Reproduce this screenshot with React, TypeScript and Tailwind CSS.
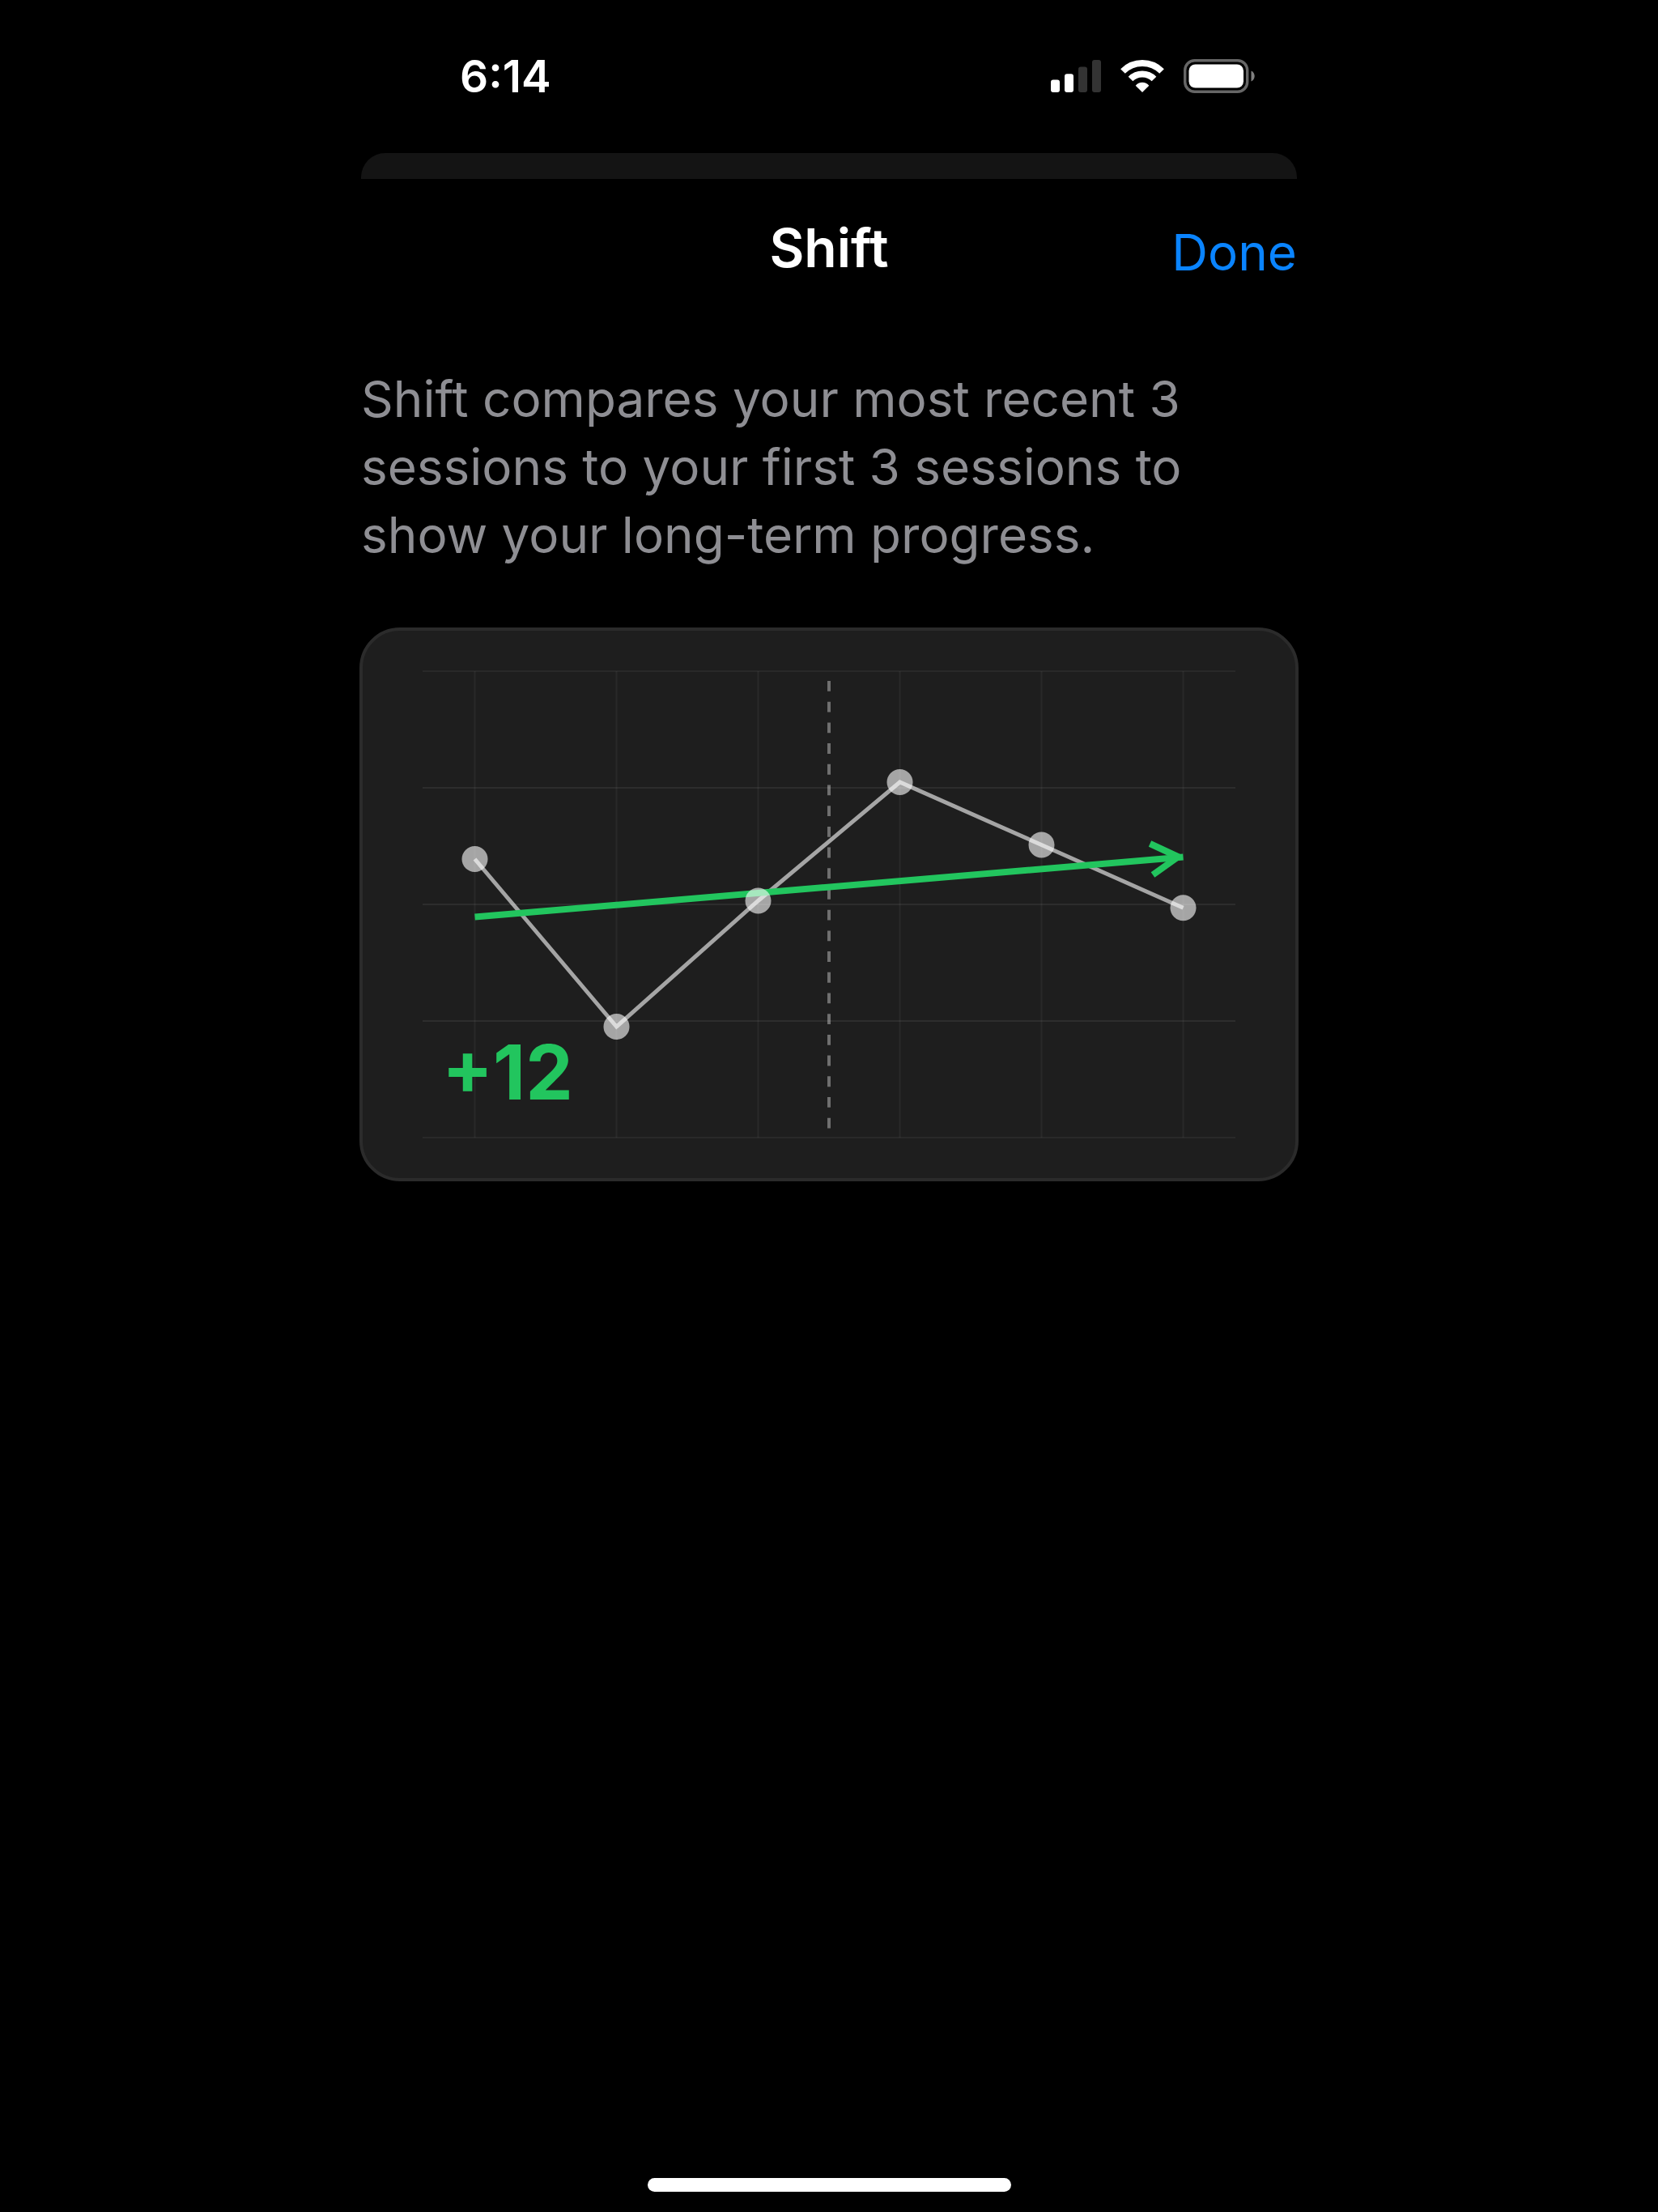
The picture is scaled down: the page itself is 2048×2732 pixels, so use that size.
import { useState } from "react"

type Point = {
  x: number
  y: number
}

const points: Point[] = [
  { x: 138.5, y: 282 },
  { x: 313.5, y: 489 },
  { x: 488.5, y: 333.5 },
  { x: 663.5, y: 187 },
  { x: 838.5, y: 264.5 },
  { x: 1013.5, y: 342.3 },
]

const rows = [50, 194, 338, 482, 626]

function SignalIcon() {
  return (
    <svg width="62" height="40" viewBox="0 0 62 40" aria-hidden="true">
      <rect x="0" y="24.5" width="11" height="15.5" rx="3" fill="#fff" />
      <rect x="17" y="17.3" width="11" height="22.7" rx="3" fill="#fff" />
      <rect x="34" y="8.5" width="11" height="31.5" rx="3" fill="#333" />
      <rect x="51" y="0" width="11" height="40" rx="3" fill="#333" />
    </svg>
  )
}

function WifiIcon() {
  return (
    <svg width="54" height="40" viewBox="0 0 54 40" aria-hidden="true">
      <g fill="none" stroke="#fff" strokeWidth="8">
        <path d="M2.96 13.96A34 34 0 0 1 51.04 13.96" />
        <path d="M12.5 23.5A20.5 20.5 0 0 1 41.5 23.5" />
      </g>
      <path d="M27 40L18.7 31.7A10.5 10.5 0 0 1 35.3 31.7Z" fill="#fff" />
    </svg>
  )
}

function BatteryIcon() {
  return (
    <svg width="88" height="42" viewBox="0 0 88 42" aria-hidden="true">
      <rect x="1.7" y="1.7" width="77" height="38.6" rx="12" fill="none" stroke="#666" strokeWidth="3.4" />
      <rect x="6.5" y="6.5" width="67.5" height="29" rx="8" fill="#fff" />
      <path d="M83.5 14.5C86 15.7 87.7 18 87.7 21S86 26.3 83.5 27.5Z" fill="#808080" />
    </svg>
  )
}

function ShiftChart() {

  const line = points.map((p) => `${p.x},${p.y}`).join(" ")

  return (
    <svg
      viewBox="0 0 1152 676"
      className="block w-full h-auto"
      role="img"
      aria-label="Shift +12"
    >

      {/* GRID */}

      <g stroke="#fff" strokeWidth="2">
        {rows.map((y, index) => (
          <line
            key={y}
            x1="74"
            x2="1078"
            y1={y}
            y2={y}
            strokeOpacity={index === 0 || index === rows.length - 1 ? 0.05 : 0.07}
          />
        ))}
        {points.map((p) => (
          <line key={p.x} x1={p.x} x2={p.x} y1="50" y2="626" strokeOpacity="0.05" />
        ))}
      </g>

      <line
        x1="576"
        x2="576"
        y1="62"
        y2="616"
        stroke="#fff"
        strokeOpacity="0.36"
        strokeWidth="4"
        strokeDasharray="12.85 12.85"
      />

      {/* SESSIONS */}

      <polyline points={line} fill="none" stroke="#fff" strokeOpacity="0.6" strokeWidth="5" />

      {/* TREND ARROW */}

      <g stroke="#22c55e" strokeWidth="8">
        <line x1="138.5" y1="353.5" x2="1013.5" y2="279.5" />
        <line x1="972.5" y1="263" x2="1009" y2="280" />
        <line x1="976" y1="301.5" x2="1009" y2="278" />
      </g>

      {points.map((p) => (
        <circle key={p.x} cx={p.x} cy={p.y} r="16" fill="#fff" fillOpacity="0.6" />
      ))}

      <text x="98" y="579" fontSize="93" fontWeight="700" fill="#22c55e">
        +12
      </text>

    </svg>
  )
}

export default function App() {

  const [open, setOpen] = useState(true)

  return (

    <div className="min-h-screen bg-black text-white font-['Inter',sans-serif] flex flex-col">

      <div className="w-full max-w-[1156px] mx-auto flex-1 flex flex-col">

        {/* STATUS BAR */}

        <div className="flex items-center justify-between pt-[62px] pl-[122px] pr-[52px]">

          <span className="text-[55px] leading-[64px] font-semibold">6:14</span>

          <div className="flex items-center gap-6">
            <SignalIcon />
            <WifiIcon />
            <BatteryIcon />
          </div>

        </div>

        {/* SHEET BEHIND */}

        <div className="mt-[63px] h-8 rounded-t-[30px] bg-[#141414]"></div>

        {open && (

          <main>

            <header className="mt-[43px] min-h-[90px] grid grid-cols-3 leading-[84px]">

              <h1 className="col-start-2 self-start text-center text-[66px] font-semibold">
                Shift
              </h1>

              <button
                type="button"
                onClick={() => setOpen(false)}
                className="self-end justify-self-end text-[62px] text-[#0a84ff]"
              >
                Done
              </button>

            </header>

            <p className="mt-[97px] text-[62px] leading-[84px] text-[#8e8e93]">
              Shift compares your most recent 3 sessions to your first 3 sessions to show your long-term progress.
            </p>

            <div className="mt-[72px] -mx-0.5 rounded-[50px] border-4 border-[#2b2b2b] bg-[#1e1e1e] overflow-hidden">
              <ShiftChart />
            </div>

          </main>

        )}

      </div>

      {/* HOME INDICATOR */}

      <div className="mx-auto mb-[25px] w-[449px] h-[17px] rounded-full bg-white"></div>

    </div>

  )

}
